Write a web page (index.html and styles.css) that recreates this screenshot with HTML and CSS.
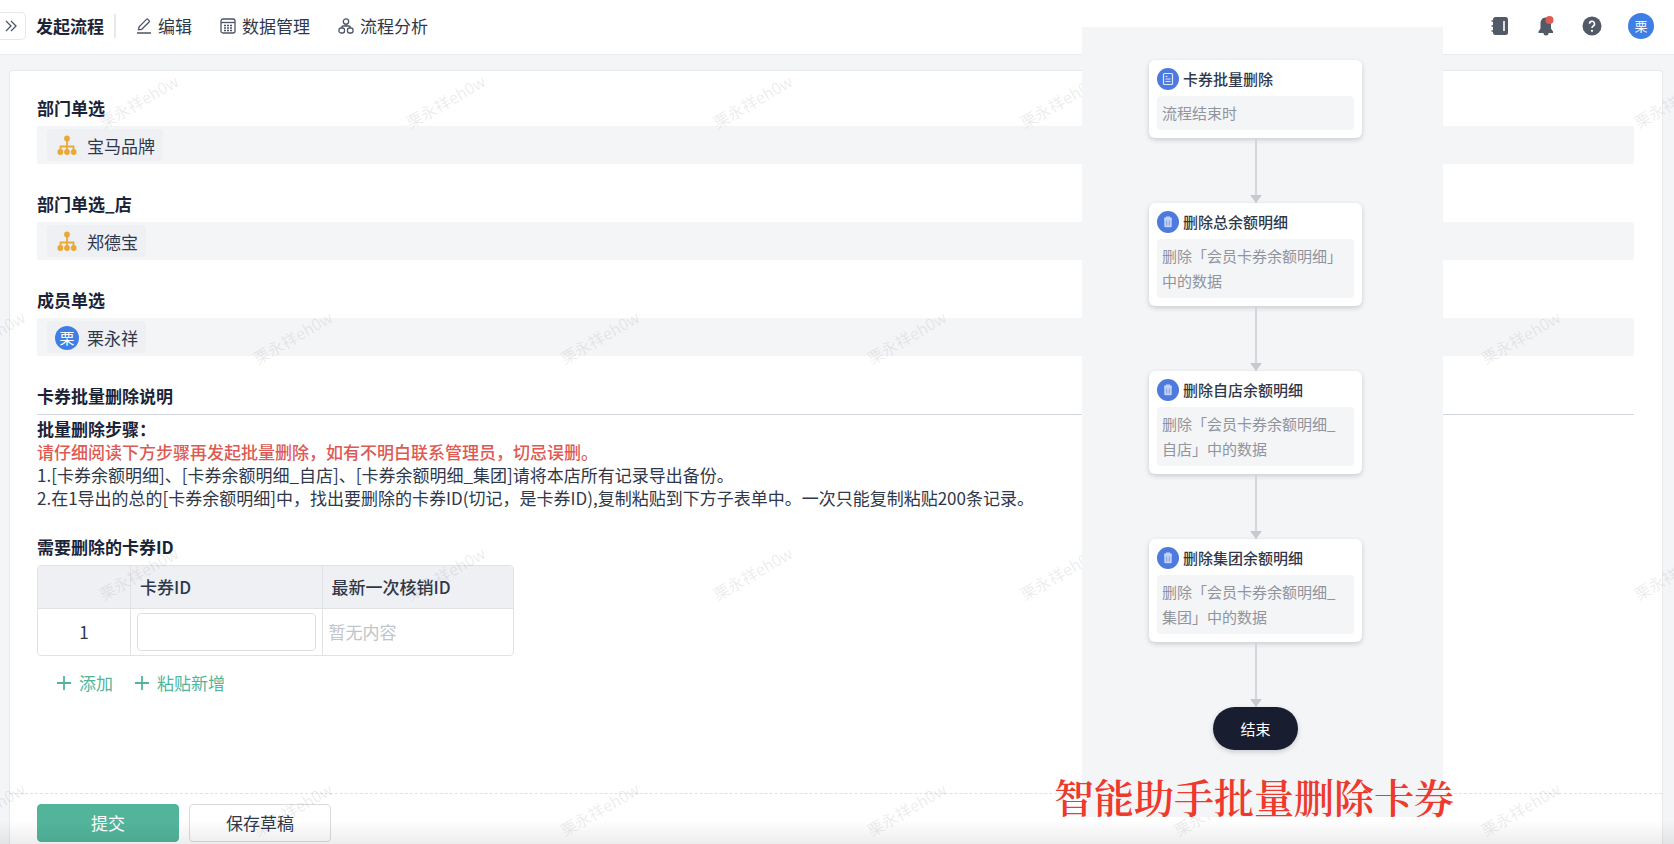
FILE: index.html
```html
<!DOCTYPE html>
<html lang="zh-CN">
<head>
    <meta charset="UTF-8">
    <meta name="viewport" content="width=device-width, initial-scale=1.0">
    <title>发起流程</title>
    <link rel="stylesheet" href="styles.css">
</head>
<body>
    <header class="topbar">
        <button type="button" class="toggle" aria-label="展开">
            <svg width="14" height="14" viewBox="0 0 14 14"><path d="M2 2l5 5-5 5M7 2l5 5-5 5"/></svg>
        </button>
        <h1 class="topbar-title">发起流程</h1>
        <nav class="topbar-nav">
            <a href="#" class="nav-link">
                <svg width="16" height="16" viewBox="0 0 16 16"><path d="M1 15h14M2.500 11.800l.6-3L10.500 1.400a1 1 0 0 1 1.400 0l1.200 1.200a1 1 0 0 1 0 1.400L5.700 11.300z"/></svg>
                编辑
            </a>
            <a href="#" class="nav-link">
                <svg width="16" height="16" viewBox="0 0 16 16"><rect x="1" y="1" width="14" height="14" rx="2"/><path d="M1 4.500h14"/><path class="dots" d="M4 7.500h8M4 10h8M4 12.500h8"/></svg>
                数据管理
            </a>
            <a href="#" class="nav-link">
                <svg width="16" height="16" viewBox="0 0 16 16"><circle cx="8" cy="3.500" r="2.700"/><rect x="1" y="10" width="5.500" height="5" rx="2"/><rect x="9.500" y="10" width="5.500" height="5" rx="2"/><path d="M8 6v2M3.700 10V9.500Q3.700 8 5.200 8h5.600q1.500 0 1.500 1.500v.5"/></svg>
                流程分析
            </a>
        </nav>
        <div class="topbar-tools">
            <button type="button" class="tool" aria-label="通讯录">
                <svg width="20" height="20" viewBox="0 0 20 20"><rect x="3" y="1" width="15" height="18" rx="2.500"/><path class="cut" d="M14 5v10"/><path class="pin" d="M1.500 5h2M1.500 10h2M1.500 15h2"/></svg>
            </button>
            <button type="button" class="tool" aria-label="消息">
                <svg width="20" height="20" viewBox="0 0 20 20"><path d="M9.500 1.500c3.500 0 5.500 2.800 5.500 6v5l2 3v1.500h-4.500a2.500 2.500 0 0 1-5 0H2.500v-1.500l2-3v-5c0-3.200 2-6 5-6z"/><circle class="badge" cx="13.500" cy="4" r="4"/></svg>
            </button>
            <button type="button" class="tool" aria-label="帮助">
                <svg width="20" height="20" viewBox="0 0 20 20"><circle cx="10" cy="10" r="9.500"/><path class="cut" d="M7.500 7.800a2.500 2.500 0 1 1 3.700 2.200q-1.200.7-1.200 2"/><circle class="dot" cx="10" cy="14.800" r="1.100"/></svg>
            </button>
            <span class="avatar avatar-lg">栗</span>
        </div>
    </header>

    <main class="page">
        <form class="sheet">
            <div class="sheet-body">
                <section class="field">
                    <h2 class="label">部门单选</h2>
                    <div class="value">
                        <span class="chip">
                            <svg class="org" width="24" height="24" viewBox="0 0 24 24"><path d="M12 5v12M5.500 17v-4.500h13V17"/><circle cx="12" cy="4.500" r="2.900"/><circle cx="5.300" cy="18" r="2.900"/><circle cx="12" cy="18" r="2.900"/><circle cx="18.700" cy="18" r="2.900"/></svg>
                            宝马品牌
                        </span>
                    </div>
                </section>
                <section class="field">
                    <h2 class="label">部门单选_店</h2>
                    <div class="value">
                        <span class="chip">
                            <svg class="org" width="24" height="24" viewBox="0 0 24 24"><path d="M12 5v12M5.500 17v-4.500h13V17"/><circle cx="12" cy="4.500" r="2.900"/><circle cx="5.300" cy="18" r="2.900"/><circle cx="12" cy="18" r="2.900"/><circle cx="18.700" cy="18" r="2.900"/></svg>
                            郑德宝
                        </span>
                    </div>
                </section>
                <section class="field">
                    <h2 class="label">成员单选</h2>
                    <div class="value">
                        <span class="chip"><span class="avatar">栗</span>栗永祥</span>
                    </div>
                </section>
                <section class="field field-notes">
                    <h2 class="label">卡券批量删除说明</h2>
                    <div class="notes">
                        <p><strong>批量删除步骤：</strong></p>
                        <p class="warn">请仔细阅读下方步骤再发起批量删除，如有不明白联系管理员，切忌误删。</p>
                        <p>1.[卡券余额明细]、[卡券余额明细_自店]、[卡券余额明细_集团]请将本店所有记录导出备份。</p>
                        <p>2.在1导出的总的[卡券余额明细]中，找出要删除的卡券ID(切记，是卡券ID),复制粘贴到下方子表单中。一次只能复制粘贴200条记录。</p>
                    </div>
                </section>
                <section class="field">
                    <h2 class="label" id="sub-title">需要删除的卡券ID</h2>
                    <table class="subform" aria-labelledby="sub-title">
                        <thead>
                            <tr><th class="col-no"></th><th id="col-card">卡券ID</th><th>最新一次核销ID</th></tr>
                        </thead>
                        <tbody>
                            <tr>
                                <td class="col-no">1</td>
                                <td><input type="text" class="cell-input" aria-labelledby="col-card"></td>
                                <td class="empty">暂无内容</td>
                            </tr>
                        </tbody>
                    </table>
                    <div class="sub-actions">
                        <button type="button" class="add">
                            <svg width="16" height="16" viewBox="0 0 16 16"><path d="M8 1v14M1 8h14"/></svg>添加
                        </button>
                        <button type="button" class="add">
                            <svg width="16" height="16" viewBox="0 0 16 16"><path d="M8 1v14M1 8h14"/></svg>粘贴新增
                        </button>
                    </div>
                </section>
            </div>
            <footer class="sheet-footer">
                <button type="submit" class="btn btn-primary">提交</button>
                <button type="button" class="btn">保存草稿</button>
            </footer>
        </form>
    </main>

    <div class="watermark" aria-hidden="true">
        <div class="wm-row"><span>栗永祥eh0w</span><span>栗永祥eh0w</span><span>栗永祥eh0w</span><span>栗永祥eh0w</span><span>栗永祥eh0w</span><span>栗永祥eh0w</span></div>
        <div class="wm-row wm-shift"><span>栗永祥eh0w</span><span>栗永祥eh0w</span><span>栗永祥eh0w</span><span>栗永祥eh0w</span><span>栗永祥eh0w</span><span>栗永祥eh0w</span></div>
        <div class="wm-row"><span>栗永祥eh0w</span><span>栗永祥eh0w</span><span>栗永祥eh0w</span><span>栗永祥eh0w</span><span>栗永祥eh0w</span><span>栗永祥eh0w</span></div>
        <div class="wm-row wm-shift"><span>栗永祥eh0w</span><span>栗永祥eh0w</span><span>栗永祥eh0w</span><span>栗永祥eh0w</span><span>栗永祥eh0w</span><span>栗永祥eh0w</span></div>
    </div>

    <aside class="flow">
        <div class="node">
            <h3 class="node-title">
                <svg width="22" height="22" viewBox="0 0 22 22"><circle cx="11" cy="11" r="11"/><rect class="line" x="6.500" y="5.500" width="9" height="11" rx="1"/><path class="line" d="M8.500 8.500h2M8.500 11h5M8.500 13.500h5"/></svg>
                卡券批量删除
            </h3>
            <p class="node-text">流程结束时</p>
        </div>
        <div class="arrow"></div>
        <div class="node">
            <h3 class="node-title">
                <svg width="22" height="22" viewBox="0 0 22 22"><circle cx="11" cy="11" r="11"/><path class="bin" d="M9 5.500h4l.6 1.200H15v1.500H7V6.700h1.400zM7.300 8h7.400v7.300q0 1-1 1H8.300q-1 0-1-1z"/><path class="bin-line" d="M9.700 9.500v5M12.300 9.500v5"/></svg>
                删除总余额明细
            </h3>
            <p class="node-text">删除「会员卡券余额明细」中的数据</p>
        </div>
        <div class="arrow"></div>
        <div class="node">
            <h3 class="node-title">
                <svg width="22" height="22" viewBox="0 0 22 22"><circle cx="11" cy="11" r="11"/><path class="bin" d="M9 5.500h4l.6 1.200H15v1.500H7V6.700h1.400zM7.300 8h7.400v7.300q0 1-1 1H8.300q-1 0-1-1z"/><path class="bin-line" d="M9.700 9.500v5M12.300 9.500v5"/></svg>
                删除自店余额明细
            </h3>
            <p class="node-text">删除「会员卡券余额明细_自店」中的数据</p>
        </div>
        <div class="arrow"></div>
        <div class="node">
            <h3 class="node-title">
                <svg width="22" height="22" viewBox="0 0 22 22"><circle cx="11" cy="11" r="11"/><path class="bin" d="M9 5.500h4l.6 1.200H15v1.500H7V6.700h1.400zM7.300 8h7.400v7.300q0 1-1 1H8.300q-1 0-1-1z"/><path class="bin-line" d="M9.700 9.500v5M12.300 9.500v5"/></svg>
                删除集团余额明细
            </h3>
            <p class="node-text">删除「会员卡券余额明细_集团」中的数据</p>
        </div>
        <div class="arrow"></div>
        <div class="node-end">结束</div>
    </aside>
    <p class="caption">智能助手批量删除卡券</p>
    <div class="fade"></div>
</body>
</html>
```

FILE: styles.css
```css
* {
    box-sizing: border-box;
}
body {
    margin: 0;
    min-height: 100vh;
    display: flex;
    flex-direction: column;
    position: relative;
    overflow-x: hidden;
    background: #f4f5f7;
    color: #2f384a;
    font-family: "Noto Sans CJK SC", sans-serif;
    font-size: 17px;
    line-height: 24px;
}
h1, h2, h3, p {
    margin: 0;
}
button, input {
    font: inherit;
    color: inherit;
}
button {
    cursor: pointer;
}
svg {
    flex: none;
}

/* top bar */
.topbar {
    height: 55px;
    display: flex;
    align-items: center;
    padding: 0 20px 3px 0;
    background: #fff;
    border-bottom: 1px solid #e9ebee;
}
.toggle {
    width: 26px;
    height: 28px;
    padding: 0 0 0 4px;
    display: flex;
    align-items: center;
    background: #fff;
    border: 1px solid #e6e7ea;
    border-left: 0;
    border-radius: 0 5px 5px 0;
}
.toggle svg, .nav-link svg {
    fill: none;
    stroke: #4c5566;
    stroke-width: 1.3;
}
.topbar-title {
    margin-left: 10px;
    padding-right: 10px;
    font-size: 17px;
    font-weight: 700;
    color: #1b2437;
    border-right: 2px solid #e6e8eb;
}
.topbar-nav {
    display: flex;
    gap: 28px;
    margin-left: 20px;
}
.nav-link {
    display: flex;
    align-items: center;
    gap: 6px;
    color: #2f384a;
    text-decoration: none;
}
.nav-link .dots {
    stroke-width: 1.5;
    stroke-dasharray: 2 1;
}
.topbar-tools {
    display: flex;
    align-items: center;
    gap: 26px;
    margin-left: auto;
}
.tool {
    display: flex;
    padding: 0;
    border: 0;
    background: none;
}
.tool svg {
    fill: #525967;
}
.tool .cut {
    fill: none;
    stroke: #fff;
    stroke-width: 1.6;
}
.tool .pin {
    stroke: #525967;
    stroke-width: 1.4;
}
.tool .dot {
    fill: #fff;
}
.tool .badge {
    fill: #e05a54;
}
.avatar {
    width: 24px;
    height: 24px;
    border-radius: 50%;
    background: #3f7ee4;
    color: #fff;
    font-size: 15px;
    line-height: 24px;
    text-align: center;
}
.avatar-lg {
    width: 26px;
    height: 26px;
    font-size: 13px;
    line-height: 26px;
}

/* form sheet */
.page {
    flex: 1;
    display: flex;
    padding: 15px 11px 0 9px;
}
.sheet {
    flex: 1;
    display: flex;
    flex-direction: column;
    background: #fff;
    border: 1px solid #e6e8ea;
    border-bottom: 0;
    border-radius: 4px 4px 0 0;
}
.sheet-body {
    flex: 1;
    padding: 25px 28px 0 27px;
}
.field {
    margin-bottom: 28px;
}
.field-notes {
    margin-bottom: 26px;
}
.label {
    margin-bottom: 6px;
    font-size: 17px;
    font-weight: 700;
    color: #1b2437;
}
.value {
    height: 38px;
    display: flex;
    align-items: center;
    padding: 0 10px;
    background: #f4f5f7;
    border-radius: 2px;
}
.chip {
    height: 32px;
    display: flex;
    align-items: center;
    gap: 8px;
    padding: 1px 8px 0;
    background: #eff0f4;
    border-radius: 4px;
}
.org {
    fill: #eaa935;
}
.org path {
    fill: none;
    stroke: #eaa935;
    stroke-width: 1.8;
}
.notes {
    padding-top: 2px;
    border-top: 1px solid #d3d6dc;
    line-height: 23px;
}
.notes strong {
    color: #1b2437;
}
.notes .warn {
    color: #dd5a54;
    font-weight: 500;
}
.subform {
    width: 477px;
    table-layout: fixed;
    border-collapse: separate;
    border-spacing: 0;
    border: 1px solid #e0e2e6;
    border-radius: 4px;
    overflow: hidden;
}
.subform th {
    height: 43px;
    padding: 0 9px;
    background: #eff0f4;
    font-weight: 500;
    text-align: left;
    border-bottom: 1px solid #e0e2e6;
}
.subform td {
    height: 46px;
    padding: 0 6px;
}
.subform th + th, .subform td + td {
    border-left: 1px solid #e0e2e6;
}
.subform .col-no {
    width: 92px;
    text-align: center;
}
.subform .empty {
    color: #c0c4cb;
}
.cell-input {
    display: block;
    width: 100%;
    height: 38px;
    padding: 0 8px;
    border: 1px solid #dcdee2;
    border-radius: 4px;
    background: #fff;
}
.sub-actions {
    display: flex;
    gap: 21px;
    padding: 15px 19px;
}
.add {
    display: flex;
    align-items: center;
    gap: 7px;
    padding: 0;
    border: 0;
    background: none;
    color: #52b59b;
}
.add svg {
    stroke: #52b59b;
    stroke-width: 1.8;
}
.sheet-footer {
    display: flex;
    gap: 10px;
    padding: 10px 27px 2px;
    border-top: 1px dashed #dfe1e4;
}
.btn {
    width: 142px;
    height: 38px;
    padding: 0;
    border: 1px solid #d9dbdf;
    border-radius: 4px;
    background: #fff;
}
.btn-primary {
    background: #52b59b;
    border-color: #52b59b;
    color: #fff;
}

/* watermark */
.watermark {
    position: absolute;
    inset: 0;
    overflow: hidden;
    pointer-events: none;
    color: rgba(60, 60, 60, 0.1);
    font-size: 16px;
}
.wm-row {
    display: flex;
    height: 236px;
    margin-left: -15px;
    align-items: center;
}
.wm-row:first-child {
    height: 219px;
    padding-bottom: 17px;
}
.wm-shift {
    margin-left: -168px;
}
.wm-row span {
    flex: 0 0 307px;
    text-align: center;
    transform: rotate(-30deg);
}

/* flow panel */
.flow {
    position: absolute;
    top: 27px;
    right: 231px;
    width: 361px;
    height: 790px;
    padding: 33px 81px 0 67px;
    display: flex;
    flex-direction: column;
    align-items: center;
    background: #f4f5f7;
    font-size: 15px;
}
.node {
    width: 100%;
    padding: 8px;
    background: #fff;
    border-radius: 6px;
    box-shadow: 0 2px 5px rgba(30, 40, 60, 0.2);
}
.node-title {
    display: flex;
    align-items: center;
    gap: 4px;
    height: 22px;
    margin-bottom: 6px;
    font-size: 15px;
    font-weight: 500;
}
.node-title svg {
    fill: #4c7adf;
}
.node-title .line {
    fill: none;
    stroke: #dfe8fb;
    stroke-width: 1.2;
}
.node-title .bin {
    fill: #c3d3f6;
}
.node-title .bin-line {
    stroke: #7b9de8;
}
.node-text {
    padding: 4px 5px 5px;
    line-height: 25px;
    color: #90949d;
    background: #f4f5f7;
    border-radius: 4px;
}
.arrow {
    position: relative;
    width: 2px;
    height: 65px;
    background: #d3d5da;
}
.arrow::after {
    content: "";
    position: absolute;
    left: -5px;
    bottom: 0;
    border: 6px solid transparent;
    border-top: 8px solid #c8cad1;
    border-bottom: 0;
}
.node-end {
    width: 85px;
    height: 43px;
    border-radius: 22px;
    background: #181e30;
    color: #fff;
    line-height: 43px;
    text-align: center;
    box-shadow: 0 2px 5px rgba(30, 40, 60, 0.2);
}
.caption {
    position: absolute;
    top: 766px;
    right: 220px;
    color: #ee3a2c;
    font-family: "Noto Serif CJK SC", "Songti SC", "Liberation Serif", "Noto Sans CJK SC", serif;
    font-size: 40px;
    font-weight: 600;
    line-height: 60px;
}
.fade {
    position: absolute;
    left: 0;
    right: 0;
    bottom: 0;
    height: 24px;
    pointer-events: none;
    background: linear-gradient(rgba(0, 0, 0, 0), rgba(0, 0, 0, 0.07));
}
```
